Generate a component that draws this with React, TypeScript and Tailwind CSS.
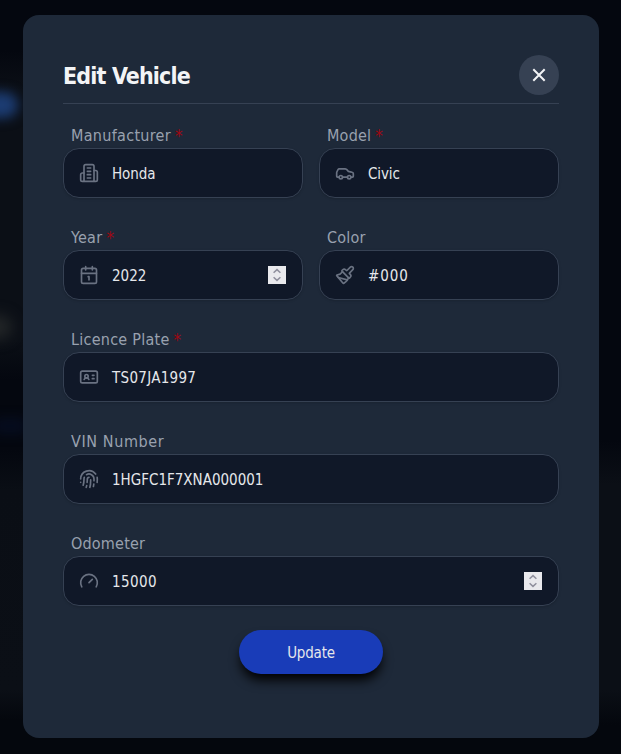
import type { ReactNode } from "react";

const icons: Record<string, ReactNode> = {
  building: (
    <>
      <path d="M6 22V4a2 2 0 0 1 2-2h8a2 2 0 0 1 2 2v18Z" />
      <path d="M6 12H4a2 2 0 0 0-2 2v6a2 2 0 0 0 2 2h2" />
      <path d="M18 9h2a2 2 0 0 1 2 2v9a2 2 0 0 1-2 2h-2" />
      <path d="M10 6h4M10 10h4M10 14h4M10 18h4" />
    </>
  ),
  car: (
    <>
      <path d="M19 17h2c.6 0 1-.4 1-1v-3c0-.9-.7-1.7-1.5-1.9C18.7 10.6 16 10 16 10s-1.3-1.4-2.2-2.3c-.5-.4-1.1-.7-1.8-.7H5c-.6 0-1.1.4-1.4.9l-1.4 2.9A3.7 3.7 0 0 0 2 12v4c0 .6.4 1 1 1h2" />
      <circle cx="7" cy="17" r="2" />
      <path d="M9 17h6" />
      <circle cx="17" cy="17" r="2" />
    </>
  ),
  calendar: (
    <>
      <path d="M11 14h1v4M16 2v4M3 10h18M8 2v4" />
      <rect x="3" y="4" width="18" height="18" rx="2" />
    </>
  ),
  brush: (
    <>
      <path d="m14.622 17.897-10.68-2.913" />
      <path d="M18.376 2.622a1 1 0 1 1 3.002 3.002L17.36 9.643a.5.5 0 0 0 0 .707l.944.944a2.41 2.41 0 0 1 0 3.408l-.944.944a.5.5 0 0 1-.707 0L8.354 7.348a.5.5 0 0 1 0-.707l.944-.944a2.41 2.41 0 0 1 3.408 0l.944.944a.5.5 0 0 0 .707 0z" />
      <path d="M9 8c-1.804 2.71-3.97 3.46-6.583 3.948a.507.507 0 0 0-.302.819l7.32 8.883a1 1 0 0 0 1.185.204C12.735 20.405 16 16.792 16 15" />
    </>
  ),
  card: (
    <>
      <path d="M16 10h2M16 14h2M6.17 15a3 3 0 0 1 5.66 0" />
      <circle cx="9" cy="11" r="2" />
      <rect x="2" y="5" width="20" height="14" rx="2" />
    </>
  ),
  fingerprint: (
    <>
      <path d="M12 10a2 2 0 0 0-2 2c0 1.02-.1 2.51-.26 4" />
      <path d="M14 13.12c0 2.38 0 6.38-1 8.88" />
      <path d="M17.29 21.02c.12-.6.43-2.3.5-3.02" />
      <path d="M2 12a10 10 0 0 1 18-6" />
      <path d="M2 16h.01" />
      <path d="M21.8 16c.2-2 .131-5.354 0-6" />
      <path d="M5 19.5C5.5 18 6 15 6 12a6 6 0 0 1 .34-2" />
      <path d="M8.65 22c.21-.66.45-1.32.57-2" />
      <path d="M9 6.8a6 6 0 0 1 9 5.2v2" />
    </>
  ),
  gauge: (
    <>
      <path d="m12 14 4-4" />
      <path d="M3.34 19a10 10 0 1 1 17.32 0" />
    </>
  ),
};

type FieldProps = {
  label: string;
  value: string;
  icon: string;
  labelClass: string;
  valueClass: string;
  required?: boolean;
  stepper?: boolean;
  wide?: boolean;
};

function Stepper() {
  return (
    <svg className="ml-auto h-[18px] w-[18px] shrink-0 bg-[#e9e9ed]" viewBox="0 0 18 18" fill="none" stroke="#8f8f9d" strokeWidth="1.5">
      <path d="m5.6 6.8 3.4-3.2 3.4 3.2M5.6 11.2 9 14.4l3.4-3.2" />
    </svg>
  );
}

function Field({ label, value, icon, labelClass, valueClass, required, stepper, wide }: FieldProps) {
  return (
    <div className={wide ? "col-span-2" : ""}>
      <div className="flex h-6 items-center whitespace-nowrap pl-2 text-base text-gray-400">
        <span className={labelClass}>{label}</span>
        {required && <span className="ml-1 text-[17px] leading-6 text-[#9f0712]">*</span>}
      </div>
      <div className="flex h-[50px] items-center rounded-2xl border border-gray-700 bg-gray-900 pr-4 pl-[15px] shadow-sm">
        <svg className="h-5 w-5 shrink-0 text-gray-500" viewBox="0 0 24 24" fill="none" stroke="currentColor" strokeWidth="2" strokeLinecap="round" strokeLinejoin="round">
          {icons[icon]}
        </svg>
        <span className={`ml-[13px] whitespace-nowrap pt-0.5 text-[15px] text-gray-200 ${valueClass}`}>{value}</span>
        {stepper && <Stepper />}
      </div>
    </div>
  );
}

export default function App() {
  return (
    <main className="relative h-[754px] w-[621px] overflow-hidden bg-[#0a0e16] px-[22px] pt-[15px] font-['DejaVu_Sans_Condensed','DejaVu_Sans',sans-serif] font-stretch-condensed">
      <div className="absolute inset-0 bg-[linear-gradient(to_bottom,#04070f_0,#04070f_50px,#0b0f16_90px,#0b0f16_340px,#04070f_380px,#04070f_450px,#0a0e15_490px,#0b0f16_690px,#04070d_720px,#04070d_754px)]" />
      <div className="absolute top-0 right-0 h-full w-[40px] bg-[linear-gradient(to_bottom,#04070f_0,#04070f_440px,#0b0f16_485px,#0b0f16_690px,#04070d_725px)]" />
      <div className="absolute -left-8 top-[92px] h-[26px] w-[50px] rounded-full bg-[#1c3c72] blur-[6px]" />
      <div className="absolute -left-5 top-[315px] h-6 w-8 rounded-full bg-[#222527] blur-[7px]" />
      <div className="absolute -left-2 top-[418px] h-4 w-9 rounded-full bg-[#06102a]/60 blur-[6px]" />
      <section className="relative ml-px h-[723px] w-[576px] rounded-2xl bg-gray-800 p-10">
        <header className="flex h-[49px] items-start justify-between border-b border-gray-700">
          <h1 className="whitespace-nowrap text-[23px] leading-[42px] font-bold tracking-[-0.85px] text-gray-100">Edit Vehicle</h1>
          <button aria-label="Close" className="flex h-10 w-10 items-center justify-center rounded-full bg-gray-700 text-gray-100">
            <svg className="h-5 w-5" viewBox="0 0 20 20" fill="none" stroke="currentColor" strokeWidth="2">
              <path d="m4.3 4.3 11.4 11.4M15.7 4.3 4.3 15.7" />
            </svg>
          </button>
        </header>
        <div className="mt-5 grid grid-cols-2 gap-x-4 gap-y-7">
          <Field label="Manufacturer" value="Honda" icon="building" labelClass="tracking-[0.3px]" valueClass="tracking-[-0.1px]" required />
          <Field label="Model" value="Civic" icon="car" labelClass="tracking-[0.2px]" valueClass="tracking-[-0.1px]" required />
          <Field label="Year" value="2022" icon="calendar" labelClass="tracking-[0.3px]" valueClass="tracking-[0px]" required stepper />
          <Field label="Color" value="#000" icon="brush" labelClass="tracking-[0.2px]" valueClass="tracking-[0.9px]" />
          <Field label="Licence Plate" value="TS07JA1997" icon="card" labelClass="tracking-[0.25px]" valueClass="tracking-[0.3px]" required wide />
          <Field label="VIN Number" value="1HGFC1F7XNA000001" icon="fingerprint" labelClass="tracking-[0.6px]" valueClass="tracking-[0px]" wide />
          <Field label="Odometer" value="15000" icon="gauge" labelClass="tracking-[0.2px]" valueClass="tracking-[0.4px]" stepper wide />
        </div>
        <button className="mx-auto mt-6 flex h-11 w-36 items-center justify-center rounded-full bg-[#193cb8] pt-[3px] text-[15px] tracking-[-0.2px] text-gray-200 shadow-[0_8px_12px_-2px_#000]">
          Update
        </button>
      </section>
    </main>
  );
}
